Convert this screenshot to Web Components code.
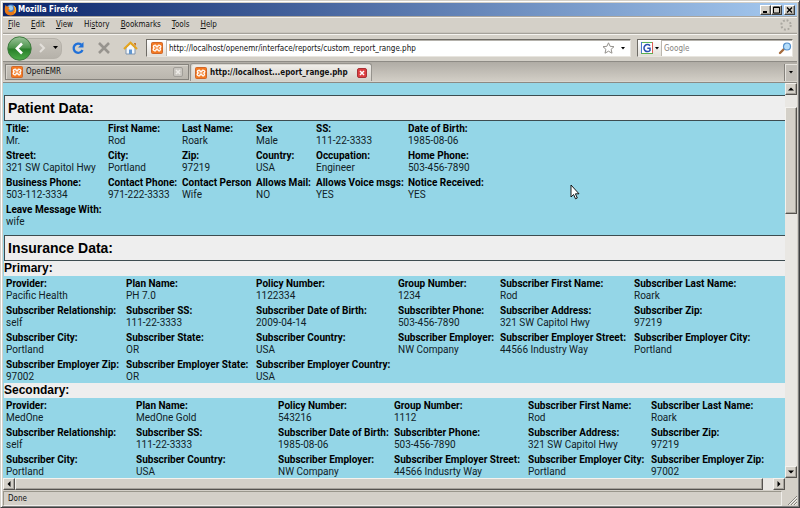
<!DOCTYPE html>
<html lang="en">
<head>
<meta charset="utf-8">
<title>Mozilla Firefox</title>
<style>
html, body { height: 100%; margin: 0; }
body { font: 8px/12px "DejaVu Sans Condensed", "DejaVu Sans", sans-serif; color: #111; background: #d4d0c8; overflow: hidden; }
</style>
</head>
<body>
<browser-window>
  <title-bar slot="chrome">Mozilla Firefox</title-bar>
  <menu-bar slot="chrome"></menu-bar>
  <nav-bar slot="chrome"></nav-bar>
  <tab-strip slot="chrome">
    <browser-tab>OpenEMR</browser-tab>
    <browser-tab active>http://localhost...eport_range.php</browser-tab>
  </tab-strip>
  <scroll-view slot="page">
    <patient-report></patient-report>
  </scroll-view>
  <status-bar slot="status">Done</status-bar>
</browser-window>

<script>
const define = (name, html, setup) => {
  const template = document.createElement('template');
  template.innerHTML = '<style>:host,*{box-sizing:border-box} button{font:inherit;color:inherit;margin:0;padding:0;border:0;background:none;display:flex;align-items:center;justify-content:center;flex:none} svg{display:block;flex:none}</style>' + html;
  customElements.define(name, class extends HTMLElement {
    constructor() {
      super();
      this.attachShadow({ mode: 'open' }).append(template.content.cloneNode(true));
    }
    connectedCallback() {
      if (setup && !this.ready) { this.ready = true; setup(this.shadowRoot, this); }
    }
  });
};

define('browser-window', `
<style>
:host { display: flex; flex-direction: column; height: 100vh; padding: 1px 2px 1px 1px; background: #d4d0c8; border: 1px solid; border-color: #d4d0c8 #404040 #404040 #d4d0c8; box-shadow: inset 1px 1px #fff, inset -1px -1px #808080; }
.body { display: flex; flex-direction: column; flex: 1; min-height: 0; margin: 1px 0 0 1px; }
.page { flex: 1; min-height: 0; display: flex; }
::slotted([slot=page]) { flex: 1; min-width: 0; }
</style>
<div class="body"><slot name="chrome"></slot><div class="page"><slot name="page"></slot></div><slot name="status"></slot></div>`);

define('xampp-icon', `
<style>:host { display: block; flex: none; }</style>
<svg width="12" height="12" viewBox="0 0 12 12"><rect x=".5" y=".5" width="11" height="11" rx="1" fill="#f47a22" stroke="#cf672a"/><path d="M3 3.500c1.500-1 2.200 0 2.200 1.300h1.600C6.800 3.500 7.500 2.500 9 3.500s.8 1.500-.2 2.500c1 1 1.200 1.500.2 2.500s-2.200 0-2.200-1.300H5.200C5.200 8.500 4.500 9.500 3 8.500s-.8-1.500.2-2.500C2.200 5 2 4.500 3 3.500z" fill="none" stroke="#fff" stroke-width="1.300"/></svg>`);

define('title-bar', `
<style>
:host { display: flex; align-items: center; height: 13px; flex: none; padding: 0 2px 0 1px; background: linear-gradient(90deg, #0a246a, #a6caf0); color: #fff; font-weight: bold; }
.name { flex: 1; padding-left: 1px; }
button { width: 11px; height: 10px; background: #d4d0c8; border: 1px solid; border-color: #fff #404040 #404040 #fff; box-shadow: inset -1px -1px #9a968e; }
.close { margin-left: 2px; }
</style>
<svg width="13" height="12" viewBox="0 0 13 12"><circle cx="7" cy="5.500" r="5" fill="#4a83c8"/><circle cx="6.500" cy="4" r="2.500" fill="#9dccee"/><path d="M1.500 1 3 2.500 5.500 3 4.500 4.500 6 5.500 4 6.500C5 8.500 8 8.500 9.500 6.500 10.500 5 10 3 9 1.500 12 2.500 13 6 11.800 8.500 10 12 4.500 12.500 2 9.500.3 7.500.5 3.500 1.500 1z" fill="#e87817"/><path d="M10 2c2 2 2 5 .5 7" fill="none" stroke="#ffc62e"/></svg>
<span class="name"><slot></slot></span>
<button aria-label="Minimize"><svg width="9" height="8"><path d="M2 6h4" stroke="#000" stroke-width="2"/></svg></button>
<button aria-label="Maximize"><svg width="9" height="8"><path d="M1.500 1h6v6h-6zM1 1.500h7" fill="none" stroke="#000"/></svg></button>
<button class="close" aria-label="Close"><svg width="9" height="8"><path d="M2 1.500 7 6.500M7 1.500 2 6.500" stroke="#000" stroke-width="1.400"/></svg></button>`);

define('menu-bar', `
<style>
:host { display: flex; align-items: center; justify-content: space-between; height: 18px; flex: none; padding: 0 5px; border-top: 1px solid #aaa69f; border-bottom: 1px solid #a5a29b; box-shadow: inset 0 1px #f2f0ec, inset 0 -1px #c8c4bc; }
nav { display: flex; gap: 11px; }
</style>
<nav aria-label="Menu"></nav>
<svg width="12" height="12" viewBox="0 0 12 12"><circle cx="6" cy="6" r="4.700" fill="none" stroke="#aaa7a0" stroke-width="2" stroke-dasharray="1.850 1.850"/></svg>`,
root => {
  const nav = root.querySelector('nav');
  for (const [before, key, after] of [['', 'F', 'ile'], ['', 'E', 'dit'], ['', 'V', 'iew'], ['Hi', 's', 'tory'], ['', 'B', 'ookmarks'], ['', 'T', 'ools'], ['', 'H', 'elp']]) {
    const item = document.createElement('button');
    item.innerHTML = `<span>${before}<u>${key}</u>${after}</span>`;
    nav.append(item);
  }
});

define('nav-bar', `
<style>
:host { display: flex; align-items: center; height: 28px; flex: none; padding: 0 4px; box-shadow: inset 0 1px #f5f3ef, inset 0 -1px #8e8b85; }
.history { display: flex; align-items: center; }
.pill { display: flex; align-items: center; height: 21px; margin-left: -12px; padding-left: 12px; border-radius: 0 8px 8px 0; border: 1px solid #b5b1a9; background: linear-gradient(#c8c4bc, #b6b2aa); }
.pill button { width: 17px; height: 19px; }
.pill .more { width: 11px; }
.back { position: relative; }
.tools { display: flex; gap: 10px; padding: 0 8px; }
.tools button { width: 16px; height: 18px; }
.field { display: flex; align-items: center; height: 18px; background: #fff; border: 1px solid; border-color: #6f6c66 #e8e5df #e8e5df #6f6c66; box-shadow: inset 1px 1px #b5b2ac; }
.url { flex: 1; min-width: 0; }
.search { width: 156px; margin-left: 6px; }
.site { display: flex; align-items: center; justify-content: center; align-self: stretch; width: 20px; border-right: 1px solid #bbb7af; background: linear-gradient(#fff, #e3e0da); }
.engine { width: 24px; gap: 2px; }
input { flex: 1; min-width: 0; height: 14px; border: 0; padding: 0 2px; margin: 0; background: none; outline: 0; font: inherit; color: #111; }
input::placeholder { color: #85827e; opacity: 1; }
.drop { width: 14px; height: 14px; }
.star { width: 16px; height: 14px; }
</style>
<div class="history">
  <button class="back" aria-label="Back"><svg width="25" height="25" viewBox="0 0 25 25"><defs><linearGradient id="g" x2="0" y2="1"><stop stop-color="#9bc49a"/><stop offset=".48" stop-color="#4c944b"/><stop offset=".52" stop-color="#277d28"/><stop offset="1" stop-color="#50ae4b"/></linearGradient></defs><circle cx="12.500" cy="12.500" r="11.700" fill="url(#g)" stroke="#3d793d"/><path d="m15 7.500-5 5 5 5" fill="none" stroke="#fff" stroke-width="2.600"/></svg></button>
  <div class="pill"><button aria-label="Forward"><svg width="8" height="10"><path d="m2 1 4 4-4 4" fill="none" stroke="#e2dfda" stroke-width="2"/></svg></button><button class="more" aria-label="Recent pages"><svg width="6" height="4"><path d="M0 0h5L2.500 3z"/></svg></button></div>
</div>
<div class="tools">
  <button aria-label="Reload"><svg width="14" height="14" viewBox="0 0 14 14"><path d="M10.300 3.700A4.600 4.600 0 1 0 11.500 9" fill="none" stroke="#2070d8" stroke-width="2.300"/><path d="M12.500 1v5.500H7z" fill="#2070d8"/></svg></button>
  <button aria-label="Stop"><svg width="14" height="14"><path d="m2 2 10 10M12 2 2 12" stroke="#97948e" stroke-width="2.600"/></svg></button>
  <button aria-label="Home"><svg width="15" height="14" viewBox="0 0 15 14"><path d="M3 7v6h9V7L7.500 2.500z" fill="#f3f7fb" stroke="#7e95b0"/><path d="M1 8 7.500 1.800 14 8" fill="none" stroke="#e5a51e" stroke-width="2.200"/><path d="M6 8.500h3V13H6z" fill="#6096d0"/><path d="M11 2h2v3l-2-2z" fill="#c87828"/></svg></button>
</div>
<div class="field url"><div class="site"><xampp-icon></xampp-icon></div>
  <input aria-label="Address" value="http://localhost/openemr/interface/reports/custom_report_range.php">
  <button class="star" aria-label="Bookmark this page"><svg width="13" height="12" viewBox="0 0 13 12"><path d="m6.500.8 1.600 3.500 3.900.4-2.900 2.600.9 3.900-3.500-2-3.500 2 .9-3.900L1 4.700l3.900-.4z" fill="#fff" stroke="#94918c"/></svg></button>
  <button class="drop" aria-label="Show history"><svg width="4" height="3"><path d="M0 0h4L2 2.500z"/></svg></button>
</div>
<div class="field search"><button class="site engine" aria-label="Search engine"><svg width="12" height="12" viewBox="0 0 12 12"><path d="M0 0h12v12H0z" fill="#fff"/><path d="M0 .5h11.500" stroke="#5bb55b"/><path d="M.5 0v12" stroke="#4878cf"/><path d="M11.500 0v12" stroke="#dd5d52"/><path d="M0 11.500h12" stroke="#5caf4f"/><path d="M9 3.700A3.500 3.500 0 1 0 9 8.500V6.300H6.300" fill="none" stroke="#2a50b0" stroke-width="1.500"/></svg><svg width="4" height="3"><path d="M0 0h4L2 2.500z"/></svg></button>
  <input aria-label="Search" placeholder="Google">
  <button aria-label="Search the web"><svg width="14" height="13" viewBox="0 0 14 13"><path d="M6.500 6.500 2 11" stroke="#a66b3c" stroke-width="2.400" stroke-linecap="round"/><circle cx="9" cy="4.500" r="3.500" fill="#b5ddfa" stroke="#5590cc" stroke-width="1.200"/></svg></button>
</div>`);

define('tab-strip', `
<style>
:host { display: flex; align-items: flex-end; height: 21px; flex: none; padding: 0 0 1px 2px; gap: 1px; background: linear-gradient(#b0aca5, #d0ccc4 18px); border-bottom: 1px solid #8c8983; box-shadow: inset 0 -1px #d8d5ce; }
.list { align-self: stretch; margin-left: auto; width: 13px; margin-top: 2px; background: #c1bdb6; border-left: 1px solid #85827c; box-shadow: inset 1px 1px #e6e3dd; }
</style>
<slot></slot><button class="list" aria-label="List all tabs"><svg width="4" height="3"><path d="M0 0h4L2 2.500z"/></svg></button>`);

define('browser-tab', `
<style>
:host { display: flex; align-items: center; width: 184px; min-width: 0; height: 16px; padding: 0 5px; margin-bottom: 1px; gap: 3px; border: 1px solid #85827c; background: linear-gradient(#c8c4bc, #bab6ae); box-shadow: inset 1px 1px #d8d5ce; }
:host([active]) { width: 182px; height: 18px; margin-bottom: 0; border-bottom: 0; border-color: #96938d; border-radius: 3px 3px 0 0; background: linear-gradient(#f1efeb, #d4d0c8); font-weight: bold; padding: 0 4px; }
.name { flex: 1; white-space: nowrap; }
button { width: 10px; height: 10px; border: 1px solid #a19e98; border-radius: 2px; background: #c9c6c0; color: #eeece8; }
:host([active]) button { background: #dc3f41; border-color: #a83236; color: #fff; }
</style>
<xampp-icon></xampp-icon><span class="name"><slot></slot></span>
<button aria-label="Close tab"><svg width="6" height="6"><path d="m1 1 4 4M5 1 1 5" stroke="currentColor" stroke-width="1.500"/></svg></button>`);

define('scroll-view', `
<style>
:host { display: grid; grid-template: minmax(0, 1fr) 12px / minmax(0, 1fr) 12px; }
.view { overflow: hidden; }
.bar { display: flex; background: #e9e7e3; }
.v { flex-direction: column; }
.bar > * { background: #d4d0c8; border: 1px solid; border-color: #f4f2ee #55524e #55524e #f4f2ee; box-shadow: inset -1px -1px #a5a29b; }
.bar button { width: 12px; height: 12px; }
.v .thumb { margin-top: 12px; height: 27%; }
.v .end { margin-top: auto; }
.h .thumb { flex: 1; margin-right: 10px; }
.corner { background: #d4d0c8; }
</style>
<div class="view"><slot></slot></div>
<div class="bar v"><button aria-label="Scroll up"><svg width="6" height="4"><path d="M0 3.500 3 .5 6 3.500z"/></svg></button><div class="thumb"></div><button class="end" aria-label="Scroll down"><svg width="6" height="4"><path d="M0 .5h6L3 3.500z"/></svg></button></div>
<div class="bar h"><button aria-label="Scroll left"><svg width="4" height="6"><path d="M3.500 0v6L.5 3z"/></svg></button><div class="thumb"></div><button aria-label="Scroll right"><svg width="4" height="6"><path d="M.5 0v6L3.500 3z"/></svg></button></div>
<div class="corner"></div>`);

define('status-bar', `
<style>
:host { display: flex; align-items: stretch; height: 16px; flex: none; padding-top: 1px; }
span { flex: 1; padding: 1px 4px 0; border: 1px solid; border-color: #9a978c #f0eeea #f0eeea #9a978c; }
svg { margin: 4px 0 0 5px; }
</style>
<span><slot></slot></span>
<svg width="10" height="10"><path d="M1 10 10 1M4 10l6-6M7 10l3-3" stroke="#85827c"/><path d="m2 10 8-8M5 10l5-5M8 10l2-2" stroke="#fff" stroke-width=".7"/></svg>`);

define('section-title', `
<style>
:host { display: block; margin-left: 1px; border: 1px solid #3d4c50; border-right: 0; background: #eee; padding: 0 3px; }
h1 { margin: 0; font: bold 14px/24px "Liberation Sans", Arial, sans-serif; color: #000; }
</style><h1><slot></slot></h1>`);

define('plan-title', `
<style>
:host { display: block; margin-left: 1px; background: #eee; }
h2 { margin: 0; font: bold 12px/15px "Liberation Sans", Arial, sans-serif; color: #000; }
</style><h2><slot></slot></h2>`);

define('record-table', `
<style>
:host { display: block; padding: 2px 0 0 3px; }
table { width: 100%; table-layout: fixed; border-collapse: collapse; font: 10px/12px Roboto, "Liberation Sans", Arial, sans-serif; color: #102126; }
td { padding: 0 0 3px; vertical-align: top; white-space: nowrap; }
tr:last-child td { padding-bottom: 0; }
b { display: block; color: #000; }
</style><table><colgroup></colgroup><tbody></tbody></table>`,
(root, host) => {
  const { widths, rows } = records[host.getAttribute('record')];
  root.querySelector('colgroup').innerHTML = widths.map(w => `<col style="width:${w}px">`).join('') + '<col>';
  root.querySelector('tbody').innerHTML = rows.map(row =>
    '<tr>' + row.map(([label, value]) => `<td><b>${label}</b>${value}</td>`).join('') + '</tr>').join('');
});

const records = {
  patient: {
    widths: [102, 74, 74, 60, 92],
    rows: [
      [['Title:', 'Mr.'], ['First Name:', 'Rod'], ['Last Name:', 'Roark'], ['Sex', 'Male'], ['SS:', '111-22-3333'], ['Date of Birth:', '1985-08-06']],
      [['Street:', '321 SW Capitol Hwy'], ['City:', 'Portland'], ['Zip:', '97219'], ['Country:', 'USA'], ['Occupation:', 'Engineer'], ['Home Phone:', '503-456-7890']],
      [['Business Phone:', '503-112-3334'], ['Contact Phone:', '971-222-3333'], ['Contact Person', 'Wife'], ['Allows Mail:', 'NO'], ['Allows Voice msgs:', 'YES'], ['Notice Received:', 'YES']],
      [['Leave Message With:', 'wife']]
    ]
  },
  primary: {
    widths: [120, 130, 142, 102, 134],
    rows: [
      [['Provider:', 'Pacific Health'], ['Plan Name:', 'PH 7.0'], ['Policy Number:', '1122334'], ['Group Number:', '1234'], ['Subscriber First Name:', 'Rod'], ['Subscriber Last Name:', 'Roark']],
      [['Subscriber Relationship:', 'self'], ['Subscriber SS:', '111-22-3333'], ['Subscriber Date of Birth:', '2009-04-14'], ['Subscribter Phone:', '503-456-7890'], ['Subscriber Address:', '321 SW Capitol Hwy'], ['Subscriber Zip:', '97219']],
      [['Subscriber City:', 'Portland'], ['Subscriber State:', 'OR'], ['Subscriber Country:', 'USA'], ['Subscriber Employer:', 'NW Company'], ['Subscriber Employer Street:', '44566 Industry Way'], ['Subscriber Employer City:', 'Portland']],
      [['Subscriber Employer Zip:', '97002'], ['Subscriber Employer State:', 'OR'], ['Subscriber Employer Country:', 'USA']]
    ]
  },
  secondary: {
    widths: [130, 142, 116, 134, 123],
    rows: [
      [['Provider:', 'MedOne'], ['Plan Name:', 'MedOne Gold'], ['Policy Number:', '543216'], ['Group Number:', '1112'], ['Subscriber First Name:', 'Rod'], ['Subscriber Last Name:', 'Roark']],
      [['Subscriber Relationship:', 'self'], ['Subscriber SS:', '111-22-3333'], ['Subscriber Date of Birth:', '1985-08-06'], ['Subscribter Phone:', '503-456-7890'], ['Subscriber Address:', '321 SW Capitol Hwy'], ['Subscriber Zip:', '97219']],
      [['Subscriber City:', 'Portland'], ['Subscriber Country:', 'USA'], ['Subscriber Employer:', 'NW Company'], ['Subscriber Employer Street:', '44566 Indusrty Way'], ['Subscriber Employer City:', 'Portland'], ['Subscriber Employer Zip:', '97002']]
    ]
  }
};
for (const table of document.querySelectorAll('record-table')) table.remove();

customElements.define('patient-report', class extends HTMLElement {
  constructor() {
    super();
    this.attachShadow({ mode: 'open' }).innerHTML = `
<style>
:host { display: block; position: relative; box-sizing: border-box; min-height: 100%; padding-top: 12px; background: #94d6e7; }
.first { margin-bottom: 7px; }
.pointer { position: absolute; left: 567px; top: 101px; }
</style>
<section-title>Patient Data:</section-title>
<record-table class="first" record="patient"></record-table>
<section-title>Insurance Data:</section-title>
<plan-title>Primary:</plan-title>
<record-table record="primary"></record-table>
<plan-title>Secondary:</plan-title>
<record-table record="secondary"></record-table>
<svg class="pointer" width="10" height="16" viewBox="0 0 10 16" aria-hidden="true"><path d="M1 1v12l2.600-2.500 1.900 4.300 1.800-.8-1.900-4.200H9z" fill="#fff" stroke="#000" stroke-width=".9"/></svg>`;
  }
});
</script>
</body>
</html>
